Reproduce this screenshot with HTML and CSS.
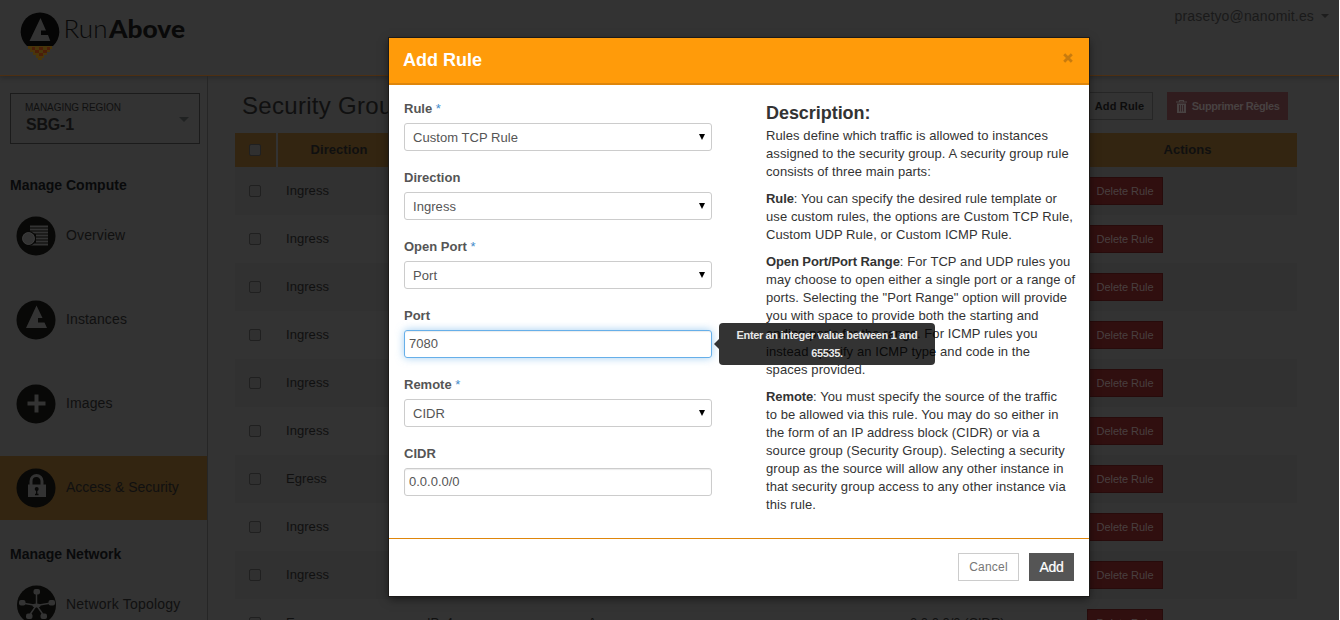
FILE: index.html
```html
<!DOCTYPE html>
<html lang="en">
<head>
<meta charset="utf-8">
<title>RunAbove - Security Group Rules</title>
<link rel="stylesheet" href="styles.css">
</head>
<body>
<div class="page">
  <header class="topbar">
    <svg class="logo" width="170" height="54" viewBox="0 0 170 54">
      <path d="M8 33H32V37H30V40H27V43H24V46H22V48H18V46H16V43H13V40H10V37H8Z" fill="#4a360b"/>
      <path d="M12 35h3v3h-3zM19 35h4v3h-4zM27 35h3v3h-3zM15 38h4v3h-4zM23 38h4v3h-4zM19 41h4v3h-4z" fill="#4b1e09"/>
      <path d="M7 34A19.3 19.3 0 1 1 33 34Z" fill="#050505"/>
      <path d="M20.500 6L26 18.500H21V23H28L30.300 29H9.500Z" fill="#333"/>
      <text x="43.500" y="26" class="logo-light" textLength="44">Run</text>
      <text x="89" y="26" class="logo-heavy" textLength="76" lengthAdjust="spacingAndGlyphs">Above</text>
    </svg>
    <div class="account">prasetyo@nanomit.es<span class="caret"></span></div>
  </header>
  <div class="columns">
    <nav class="sidebar">
      <div class="region">
        <div><div class="region-label">MANAGING REGION</div><div class="region-name">SBG-1</div></div>
        <span class="region-caret"></span>
      </div>
      <h4 class="group">Manage Compute</h4>
      <a class="item">
        <svg width="40" height="40" viewBox="0 0 40 40"><circle cx="20" cy="20" r="19.500" fill="#080807"/><path d="M14 10.500h18M14 13.500h18M14 16.500h18M20 19.500h12M20 22.500h12M20 25.500h12M14 28.500h18" stroke="#333" stroke-width="2"/><circle cx="12.500" cy="22.500" r="7.500" fill="#080807"/><circle cx="12.500" cy="22.500" r="6" fill="#333" stroke="#444" stroke-width=".8"/></svg>
        <span>Overview</span></a>
      <a class="item">
        <svg width="40" height="40" viewBox="0 0 40 40"><circle cx="20" cy="20" r="19.500" fill="#080807"/><path d="M20.500 5.500L26.500 18H22v4.500h6.500L31 28H10Z" fill="#333"/></svg>
        <span>Instances</span></a>
      <a class="item">
        <svg width="40" height="40" viewBox="0 0 40 40"><circle cx="20" cy="20" r="19.500" fill="#080807"/><path d="M20.500 10.500v18M11.500 19.500h18" stroke="#333" stroke-width="4"/></svg>
        <span>Images</span></a>
      <a class="item active">
        <svg width="40" height="40" viewBox="0 0 40 40"><circle cx="20" cy="20" r="19.500" fill="#080807"/><path d="M15 17v-4a5.500 5.500 0 0 1 11 0v4" fill="none" stroke="#333" stroke-width="3"/><path d="M12 16.500h18V29H12z" fill="#333"/><circle cx="20.700" cy="21" r="2" fill="#080807"/><path d="M20.700 21v6M19 26.500h3.500" stroke="#080807" stroke-width="1.300"/></svg>
        <span>Access &amp; Security</span></a>
      <h4 class="group second">Manage Network</h4>
      <a class="item network">
        <svg width="40" height="40" viewBox="0 0 40 40"><circle cx="20.500" cy="20" r="19.500" fill="#080807"/><path d="M20.500 8v12M6 18l14.500 2.500L35 18M13 31l7.500-11L28 31" fill="none" stroke="#333" stroke-width="1.500"/><g fill="#333"><rect x="17.500" y="4" width="6.500" height="5.500" rx="2"/><rect x="3" y="15" width="6.500" height="5.500" rx="2"/><rect x="32.500" y="15" width="6.500" height="5.500" rx="2"/><rect x="10" y="28.500" width="6.500" height="5.500" rx="2"/><rect x="24.500" y="28.500" width="6.500" height="5.500" rx="2"/><ellipse cx="20.500" cy="20.500" rx="4" ry="2"/></g></svg>
        <span>Network Topology</span></a>
    </nav>
    <main class="content">
      <div class="heading">
        <h1>Security Group Rules</h1>
        <div class="actions">
          <button class="add-rule">Add Rule</button>
          <button class="remove"><svg width="11" height="13" viewBox="0 0 11 13"><path d="M0 2h11M3.500 2V.5h4V2" fill="none" stroke="#484242" stroke-width="1.200"/><path d="M1 3.500h9V13H1z" fill="#484242"/><path d="M3.500 5v6.500M5.500 5v6.500M7.500 5v6.500" stroke="#301c1e" stroke-width=".8"/></svg><span>Supprimer Règles</span></button>
        </div>
      </div>
      <div class="row head"><span class="cell check"><i></i></span><span class="cell mid direction">Direction</span><span></span><span></span><span></span><span class="cell mid last">Actions</span></div>
      <div class="row odd"><span class="check"><i></i></span><span class="dir">Ingress</span><span></span><span></span><span></span><span><button class="delete">Delete Rule</button></span></div>
      <div class="row"><span class="check"><i></i></span><span class="dir">Ingress</span><span></span><span></span><span></span><span><button class="delete">Delete Rule</button></span></div>
      <div class="row odd"><span class="check"><i></i></span><span class="dir">Ingress</span><span></span><span></span><span></span><span><button class="delete">Delete Rule</button></span></div>
      <div class="row"><span class="check"><i></i></span><span class="dir">Ingress</span><span></span><span></span><span></span><span><button class="delete">Delete Rule</button></span></div>
      <div class="row odd"><span class="check"><i></i></span><span class="dir">Ingress</span><span></span><span></span><span></span><span><button class="delete">Delete Rule</button></span></div>
      <div class="row"><span class="check"><i></i></span><span class="dir">Ingress</span><span></span><span></span><span></span><span><button class="delete">Delete Rule</button></span></div>
      <div class="row odd"><span class="check"><i></i></span><span class="dir">Egress</span><span></span><span></span><span></span><span><button class="delete">Delete Rule</button></span></div>
      <div class="row"><span class="check"><i></i></span><span class="dir">Ingress</span><span></span><span></span><span></span><span><button class="delete">Delete Rule</button></span></div>
      <div class="row odd"><span class="check"><i></i></span><span class="dir">Ingress</span><span></span><span></span><span></span><span><button class="delete">Delete Rule</button></span></div>
      <div class="row"><span class="check"><i></i></span><span class="dir">Egress</span><span>IPv4</span><span>Any</span><span>0.0.0.0/0 (CIDR)</span><span><button class="delete">Delete Rule</button></span></div>
    </main>
  </div>
</div>

<section class="modal">
  <header class="modal-head"><h3>Add Rule</h3><svg width="10" height="10" viewBox="0 0 10 10"><path d="M1.200 1.200l7.600 7.600M8.800 1.200L1.200 8.800" stroke="#c87b0e" stroke-width="2.800"/></svg></header>
  <div class="modal-body">
    <form class="fields">
      <div class="field"><label>Rule <em>*</em></label><div class="select">Custom TCP Rule<b></b></div></div>
      <div class="field"><label>Direction</label><div class="select">Ingress<b></b></div></div>
      <div class="field"><label>Open Port <em>*</em></label><div class="select">Port<b></b></div></div>
      <div class="field"><label>Port</label><div class="input focus">7080<div class="tooltip">Enter an integer value between 1 and<br>65535.</div></div></div>
      <div class="field"><label>Remote <em>*</em></label><div class="select">CIDR<b></b></div></div>
      <div class="field"><label>CIDR</label><div class="input">0.0.0.0/0</div></div>
    </form>
    <div class="description">
      <h4>Description:</h4>
      <p>Rules define which traffic is allowed to instances<br>assigned to the security group. A security group rule<br>consists of three main parts:</p>
      <p><strong>Rule</strong>: You can specify the desired rule template or<br>use custom rules, the options are Custom TCP Rule,<br>Custom UDP Rule, or Custom ICMP Rule.</p>
      <p><strong>Open Port/Port Range</strong>: For TCP and UDP rules you<br>may choose to open either a single port or a range of<br>ports. Selecting the "Port Range" option will provide<br>you with space to provide both the starting and<br>ending ports for the range. For ICMP rules you<br>instead specify an ICMP type and code in the<br>spaces provided.</p>
      <p><strong>Remote</strong>: You must specify the source of the traffic<br>to be allowed via this rule. You may do so either in<br>the form of an IP address block (CIDR) or via a<br>source group (Security Group). Selecting a security<br>group as the source will allow any other instance in<br>that security group access to any other instance via<br>this rule.</p>
    </div>
  </div>
  <footer class="modal-foot"><button class="cancel">Cancel</button><button class="add">Add</button></footer>
</section>
</body>
</html>
```
FILE: styles.css
```css
* { box-sizing: border-box; }
html, body { margin: 0; height: 620px; overflow: hidden; }
body { background: #fff; color: #101010; font: 13px/18px "Liberation Sans", Arial, sans-serif; }
h1, h3, h4, p { margin: 0; }
button { font-family: inherit; padding: 0; border: 0; margin: 0; border-radius: 0; }

.page { width: 1339px; height: 620px; overflow: hidden; background: #333; display: flex; flex-direction: column; }
.topbar { flex: none; height: 76px; padding: 12px 10px 0 20px; display: flex; justify-content: space-between; border-bottom: 1px solid #4d2f12; box-shadow: 0 2px 5px rgba(0,0,0,.2); }
.logo-light { font: 300 26px Lato, sans-serif; fill: #090909; }
.logo-heavy { font: 900 25px Lato, sans-serif; fill: #090909; }
.account { height: 8px; display: flex; align-items: center; color: #1a1a1a; font-size: 14px; letter-spacing: .16px; }
.caret { margin-left: 7px; border: 4px solid transparent; border-top-color: #1d1d1d; border-bottom: 0; }
.columns { flex: 1; min-height: 0; display: flex; }

.sidebar { width: 208px; flex: none; padding-top: 17px; border-right: 1px solid #262626; }
.region { width: 190px; height: 51px; margin-left: 10px; padding: 8px 10px 0 14px; border: 1px solid #1b1b1b; display: flex; justify-content: space-between; }
.region-label { font-size: 10px; line-height: 12px; letter-spacing: -.05px; }
.region-name { margin-top: 1px; padding-left: 1px; font-size: 16px; line-height: 20px; font-weight: bold; letter-spacing: -.2px; }
.region-caret { margin-top: 15px; width: 10px; height: 5px; border: 5px solid transparent; border-top-color: #202222; border-bottom: 0; }
.group { height: 20px; margin: 31px 0 9px 10px; font-size: 14px; line-height: 20px; letter-spacing: 0; color: #090a0b; }
.group.second { margin: 24px 0 9px 10px; }
.item { height: 64px; margin-bottom: 20px; padding-left: 16px; display: flex; align-items: center; gap: 10px; font-size: 14px; letter-spacing: .12px; }
.item.active { background: #332511; margin-bottom: 0; letter-spacing: 0; }
.item.network { letter-spacing: .22px; }
.item span { margin-top: -3px; }

.content { width: 1062px; margin-left: 27px; flex: none; }
.heading { height: 57px; padding: 16px 9px 0 7px; display: flex; justify-content: space-between; }
.heading h1 { font-size: 24px; line-height: 28px; font-weight: normal; letter-spacing: .3px; }
.actions { display: flex; gap: 14px; }
.add-rule { width: 67px; height: 28px; border: 1px solid #262626; background: #333; color: #0c0c0c; font-size: 11px; font-weight: bold; letter-spacing: .15px; }
.remove { width: 121px; height: 28px; background: #301c1e; color: #484242; font-size: 11px; font-weight: bold; letter-spacing: -.4px; display: flex; justify-content: center; align-items: center; gap: 5px; }
.row { height: 48px; display: grid; grid-template-columns: 43px 149px 161px 322px 177px 210px; align-items: center; }
.row.odd { background: #313131; }
.row.head { height: 34px; align-items: stretch; background: #332511; font-weight: bold; letter-spacing: .05px; }
.head .check { border-right: 2px solid #333; }
.mid { display: flex; align-items: center; justify-content: center; }
.direction { padding-right: 27px; }
.last { padding-right: 9px; }
.check { padding-left: 14px; display: flex; align-items: center; }
.check i { width: 12px; height: 12px; border: 1px solid #202020; border-radius: 2px; background: #303030; }
.dir { padding-left: 8px; letter-spacing: .05px; }
.delete { display: block; width: 76px; height: 28px; background: #300f0f; border: 1px solid #270b0b; color: #494040; font-size: 11px; letter-spacing: -.05px; }

.modal { position: absolute; left: 389px; top: 38px; width: 700px; height: 558px; background: #fff; box-shadow: 0 0 0 1px #1c1a18, 0 3px 9px rgba(0,0,0,.5); display: flex; flex-direction: column; }
.modal-head { height: 47px; padding: 0 16px 1px 14px; background: #ff9b0a; border-bottom: 2px solid #df860b; display: flex; align-items: center; justify-content: space-between; color: #fff; }
.modal-head h3 { font-size: 18px; line-height: 20px; }
.modal-head svg { position: relative; top: -2px; }
.modal-body { height: 453px; padding: 13px 15px 0; display: flex; gap: 54px; color: #333; }
.fields { width: 308px; flex: none; color: #555; }
.field { height: 69px; }
.field label { display: block; height: 25px; padding-top: 1px; line-height: 20px; font-weight: bold; letter-spacing: 0; }
.field em { font-style: normal; font-weight: normal; color: #428bca; }
.select, .input { width: 308px; height: 28px; border: 1px solid #ccc; border-radius: 3px; line-height: 26px; }
.select { padding: 2px 6px 0 8px; display: flex; align-items: center; justify-content: space-between; letter-spacing: .05px; }
.select b { margin-top: -2px; border: 3px solid transparent; border-top: 6px solid #000; border-bottom: 0; }
.input { position: relative; padding-left: 4px; line-height: 25px; box-shadow: inset 0 1px 1px rgba(0,0,0,.08); }
.focus { border-color: #66afe9; box-shadow: inset 0 1px 1px rgba(0,0,0,.08), 0 0 8px rgba(102,175,233,.6); }
.tooltip { position: absolute; left: 314px; top: -8px; width: 216px; height: 42px; padding-top: 3px; border-radius: 4px; background: rgba(0,0,0,.8); color: #e8e8e8; font-size: 11px; line-height: 18px; font-weight: bold; letter-spacing: -.36px; text-align: center; white-space: nowrap; z-index: 2; }
.tooltip::before { content: ""; position: absolute; left: -5px; top: 16px; border: 5px solid transparent; border-right-color: rgba(0,0,0,.8); border-left: 0; }
.description h4 { padding-top: 5px; height: 29px; font-size: 18px; line-height: 20px; letter-spacing: -.05px; }
.description p { margin-bottom: 9px; white-space: nowrap; letter-spacing: .08px; }
.description strong { letter-spacing: -.1px; }
.modal-foot { flex: 1; border-top: 1px solid #df860b; padding: 14px 15px 0; display: flex; justify-content: flex-end; gap: 10px; }
.modal-foot button { height: 28px; }
.cancel { width: 61px; background: #fff; border: 1px solid #ccc; color: #777; font-size: 12px; letter-spacing: .2px; }
.add { width: 45px; padding-bottom: 1px; background: #555; color: #fff; font-size: 14px; letter-spacing: -.3px; -webkit-text-stroke: .2px #fff; }
```
